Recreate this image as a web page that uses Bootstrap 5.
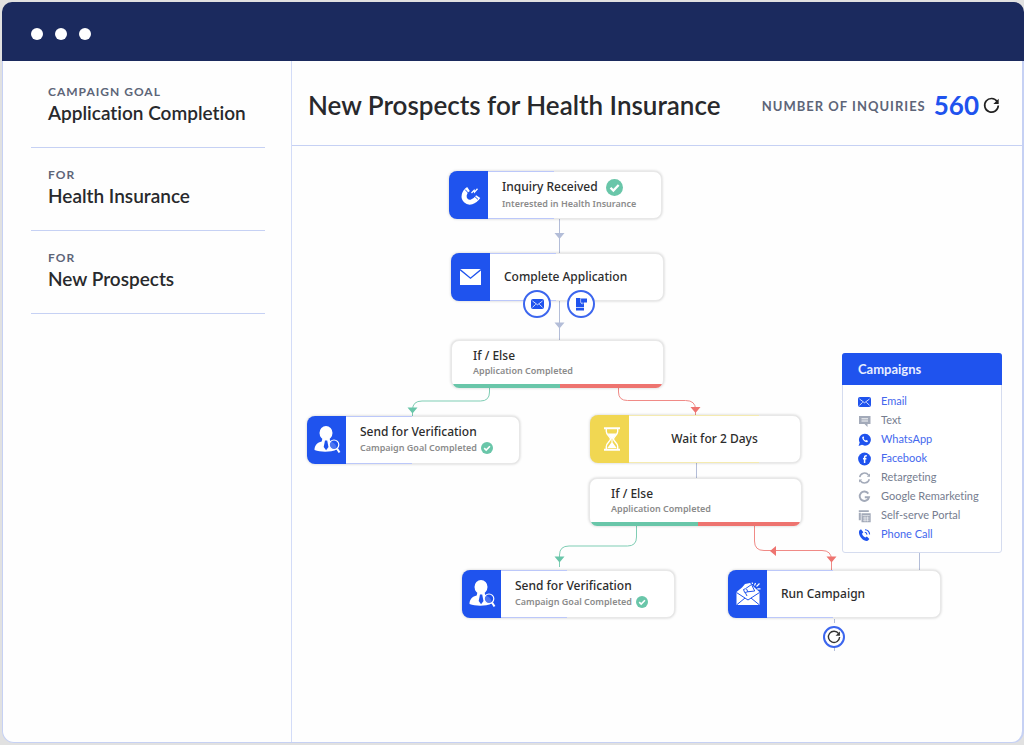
<!DOCTYPE html>
<html lang="en">
<head>
<meta charset="utf-8">
<meta name="viewport" content="width=device-width, initial-scale=1">
<title>New Prospects for Health Insurance</title>
<link href="https://cdn.jsdelivr.net/npm/bootstrap@5.3.0/dist/css/bootstrap.min.css" rel="stylesheet">
<style>
:root{--blue:#1f53ee;--line:#c6d1f4;--navy:#1b2a5e;--green:#69c6a9;--red:#ee7470;--ink:#28292c;--muted:#5d6578}
body{background:#e1e1e1;font-family:Lato,sans-serif;font-variant-ligatures:none;color:var(--ink);padding:2px 0 2px 2px}
.window{min-height:calc(100vh - 4px)}
.titlebar{background:var(--navy);height:59px;border-radius:10px 10px 0 0;padding-left:29px;gap:12px}
.window-dot{width:12px;height:12px;background:#fff;border-radius:50%}
.workspace{background:#fefefe;border:1px solid var(--line);border-top:0;border-right-width:2px;border-radius:0 0 12px 12px}
.sidebar{flex:0 0 289px;border-right:1px solid #d3dcf8;padding:4px 26px 0 28px}
.fact{padding:18px 17px 22px;border-bottom:1px solid var(--line)}
.fact dt,.count-label{font-weight:700;color:var(--muted);letter-spacing:1px}
.fact dt{font-size:12px;line-height:18px}
.fact dd{font-size:19px;line-height:24px;font-weight:600;margin:0}
.page-head{min-height:85px;padding:4px 22px 0 16px;border-bottom:1px solid var(--line)}
.page-head h1{font-size:26px;font-weight:600;line-height:32px;margin:0}
.count-label{font-size:13px;padding-top:3px}
.count{font-size:26px;line-height:32px;font-weight:700;color:var(--blue)}
.icon-btn{border:0;background:none;padding:0;line-height:0;color:#222}
.flow{overflow-x:auto;overflow-y:hidden}
.flow-canvas{width:712px;height:510px}
.wires{left:0;top:0}
/* flow nodes: their place on the canvas is set per id below */
.step{position:absolute;width:213px;height:48px;border-radius:8px;background:#fff;border:1px solid #e8e8e8;box-shadow:0 0 3px rgba(0,0,0,.2);font-family:"Noto Sans",sans-serif}
.step-icon{width:39px;height:48px;margin:-1px 0 -1px -1px;background:var(--blue);border-radius:8px 0 0 8px;flex:none}
.step-wait .step-icon{background:#f1d752}
.step-action::after{content:"";position:absolute;left:38px;width:66px;top:-1px;bottom:-1px;border:solid #bcc8fa;border-width:1px 0;pointer-events:none}
.step-wait::after{border-color:#f5ebb0;width:130px}
.step-text{padding-left:14px;white-space:nowrap}
.step-title{font-size:12px;line-height:16px;font-weight:500;color:#2c2c2c}
.step-sub{font-size:9px;line-height:16px;font-weight:600;color:#8b8b8b}
.step-branch{border-bottom:0;overflow:hidden}
.step-branch .step-text{padding-left:21px}
.step-branch .step-sub{line-height:14px}
.branch-bar{height:4px;background:linear-gradient(90deg,var(--green) 51%,var(--red) 51%)}
.channel{position:absolute;width:28px;height:28px;border:2px solid #3c66ee;border-radius:50%;background:#fff;color:var(--blue)}
#inquiry{left:157px;top:25px}
#application{left:159px;top:107px}
#branch-1{left:159px;top:194px}
#verify-1{left:15px;top:270px}
#wait{left:298px;top:269px;width:211px}
#branch-2{left:297px;top:332px}
#verify-2{left:170px;top:424px}
#run{left:436px;top:424px}
#by-email{left:231px;top:144px}
#by-mobile{left:275px;top:144px}
#repeat{left:531px;top:480px;width:22px;height:22px;color:#333}
.campaigns{position:absolute;left:550px;top:207px;width:160px;min-height:200px;border:1px solid #d5dcef;border-radius:3px;background:#fff}
.campaigns h2{margin:-1px -1px 0;height:32px;line-height:32px;padding-left:16px;background:var(--blue);color:#e8edff;font-size:13px;font-weight:700;border-radius:3px 3px 0 0}
.campaigns ul{padding:7px 0 0 15px;margin:0}
.campaigns li{height:19px;font-size:11px;gap:10px;color:#767d8f}
.campaigns li svg{color:#a3aab9;flex:none}
.campaigns a{color:#4468ee;text-decoration:none}
.campaigns .is-on svg{color:var(--blue)}
</style>
</head>
<body>
<svg class="d-none" aria-hidden="true">
  <symbol id="i-check" viewBox="0 0 18 18"><circle cx="9" cy="9" r="9" fill="#69c6a9"/><path d="M4.800 9.200l3 3 5.600-5.800" fill="none" stroke="#fff" stroke-width="2.400"/></symbol>
  <symbol id="i-refresh" viewBox="0 0 18 18"><path d="M15 4.800A7.200 7.200 0 1 0 16.200 9" fill="none" stroke="currentColor" stroke-width="1.800"/><path d="M16.600 1.800v5.600h-5.600z" fill="currentColor"/></symbol>
  <symbol id="i-mail" viewBox="0 0 13 10"><rect width="13" height="10" rx="2" fill="currentColor"/><path d="M1.500 2l5 3.800 5-3.800M1.500 8.300l3.200-3M11.500 8.300l-3.200-3" fill="none" stroke="#fff" stroke-width=".8"/></symbol>
  <symbol id="i-person" viewBox="0 0 28 28"><ellipse cx="13" cy="7" rx="6.500" ry="7" fill="#fff"/><path d="M9.500 12h7l.8 3.500c4 1 6 3 6.500 8-6 2.800-16 2.800-22.300.5 0-5 3-7.500 7.200-8.500z" fill="#fff"/><path d="M12 14.500h2.200l1.300 6.500-2.400 3.200-2.400-3.200z" fill="#1f53ee"/><circle cx="21" cy="18.800" r="4.800" fill="#1f53ee" fill-opacity=".8" stroke="#fff" stroke-width="1.200"/><path d="M24 22.500l2.500 4" stroke="#fff" stroke-width="2"/></symbol>
</svg>

<div class="window d-flex flex-column">
  <div class="titlebar d-flex align-items-center pt-1">
    <span class="window-dot"></span><span class="window-dot"></span><span class="window-dot"></span>
  </div>
  <div class="workspace d-flex flex-grow-1">
    <aside class="sidebar">
      <dl class="m-0">
        <div class="fact"><dt>CAMPAIGN GOAL</dt><dd>Application Completion</dd></div>
        <div class="fact"><dt>FOR</dt><dd>Health Insurance</dd></div>
        <div class="fact"><dt>FOR</dt><dd>New Prospects</dd></div>
      </dl>
    </aside>
    <main class="flex-grow-1 overflow-hidden">
      <header class="page-head d-flex align-items-center justify-content-between">
        <h1>New Prospects for Health Insurance</h1>
        <div class="d-flex align-items-center text-nowrap">
          <span class="count-label me-2">NUMBER OF INQUIRIES</span>
          <span class="count me-1">560</span>
          <button class="icon-btn" type="button" aria-label="Refresh"><svg width="17" height="17"><use href="#i-refresh"/></svg></button>
        </div>
      </header>
      <div class="flow">
        <div class="flow-canvas position-relative">
          <svg class="wires position-absolute" width="712" height="510" viewBox="292 146 712 510" fill="none" aria-hidden="true">
            <g stroke="#b3bdd8"><path d="M559.500 219v34M559.500 301v39M696.500 463v15M919.500 553v18"/><path d="M834.500 619v33" stroke-dasharray="4 3"/></g>
            <path d="M554.500 233h10l-5 6zM554.500 322.500h10l-5 6z" fill="#b3bdd8"/>
            <g stroke="#7fcdb4"><path d="M489.500 388v4q0 9-9 9H422q-9.500 0-9.500 9v6"/><path d="M636.500 526v11q0 9-9 9H569q-9.500 0-9.500 9v12"/></g>
            <path d="M407.500 407.500h10l-5 6zM554.500 556.500h10l-5 6z" fill="#69c6a9"/>
            <g stroke="#f08a86"><path d="M618.500 388v4q0 8.500 9 8.500h58q10 0 10 9v6"/><path d="M754.500 526v15q0 9.500 9.500 9.500h58q9.500 0 9.500 9.500v11"/></g>
            <path d="M690.500 407h10l-5 6zM826.500 556.500h10l-5 6zM776 546v10l-6-5z" fill="#ee7470"/>
          </svg>

          <div class="step step-action d-flex align-items-center" id="inquiry">
            <span class="step-icon d-flex align-items-center justify-content-center">
              <svg class="ms-1" width="22" height="22" viewBox="0 0 22 22"><path d="M8.500 5C3.800 8 2.800 13.500 5.800 16.500s8.500 2 12.400-3.800" fill="none" stroke="#fff" stroke-width="5"/><path d="M5.200 5.600l4 4.400M13.600 11.400l4.400 4" stroke="#1f53ee" stroke-width="1"/><path d="M11.500 9l2.600-2.600.4 1.800 3-3.400" fill="none" stroke="#fff" stroke-width="1.300"/></svg>
            </span>
            <div class="step-text">
              <div class="step-title d-flex align-items-center gap-2">Inquiry Received <svg width="17" height="17"><use href="#i-check"/></svg></div>
              <div class="step-sub">Interested in Health Insurance</div>
            </div>
          </div>

          <div class="step step-action d-flex align-items-center" id="application">
            <span class="step-icon d-flex align-items-center justify-content-center">
              <svg width="21" height="16" viewBox="0 0 21 16"><path d="M0 0h21v16H0z" fill="#fff"/><path d="M0 .6l10.500 8.600L21 .6" fill="none" stroke="#1f53ee" stroke-width="1.300"/></svg>
            </span>
            <div class="step-text"><div class="step-title">Complete Application</div></div>
          </div>
          <span class="channel d-flex align-items-center justify-content-center" id="by-email"><svg width="13" height="10"><use href="#i-mail"/></svg></span>
          <span class="channel d-flex align-items-center justify-content-center" id="by-mobile"><svg width="12" height="14" viewBox="0 0 12 14"><path d="M1 1h5v4l1.500 2L9 6v7.500H1z" fill="currentColor"/><path d="M6 1.500h6v4H9l-1.500 1.500V5.500H6z" fill="currentColor"/><path d="M1 10.500h8" stroke="#fff" stroke-width=".7"/><path d="M5.600 1v4.500l1.600 1.800" stroke="#fff" stroke-width=".6" fill="none"/></svg></span>

          <div class="step step-branch d-flex flex-column" id="branch-1">
            <div class="step-text my-auto"><div class="step-title">If / Else</div><div class="step-sub">Application Completed</div></div>
            <div class="branch-bar"></div>
          </div>

          <div class="step step-action d-flex align-items-center" id="verify-1">
            <span class="step-icon d-flex align-items-center justify-content-center"><svg width="28" height="28"><use href="#i-person"/></svg></span>
            <div class="step-text">
              <div class="step-title">Send for Verification</div>
              <div class="step-sub d-flex align-items-center gap-1">Campaign Goal Completed <svg width="12" height="12"><use href="#i-check"/></svg></div>
            </div>
          </div>

          <div class="step step-action step-wait d-flex align-items-center" id="wait">
            <span class="step-icon d-flex align-items-center justify-content-center">
              <svg class="ms-1" width="18" height="24" viewBox="0 0 18 24"><path d="M1 1.200h16M1 22.800h16" stroke="#fff" stroke-width="2"/><path d="M3.300 2v2.500c0 3.500 4.200 5 4.200 7.500s-4.200 4-4.200 7.500V22M14.700 2v2.500c0 3.500-4.200 5-4.200 7.500s4.200 4 4.200 7.500V22" fill="none" stroke="#fff" stroke-width="1.400"/><path d="M4.500 6.500h9L9.600 12v3.500l4 5.500H4.400l4-5.500V12z" fill="#fff"/></svg>
            </span>
            <div class="step-title flex-grow-1 text-center">Wait for 2 Days</div>
          </div>

          <div class="step step-branch d-flex flex-column" id="branch-2">
            <div class="step-text my-auto"><div class="step-title">If / Else</div><div class="step-sub">Application Completed</div></div>
            <div class="branch-bar"></div>
          </div>

          <div class="step step-action d-flex align-items-center" id="verify-2">
            <span class="step-icon d-flex align-items-center justify-content-center"><svg width="28" height="28"><use href="#i-person"/></svg></span>
            <div class="step-text">
              <div class="step-title">Send for Verification</div>
              <div class="step-sub d-flex align-items-center gap-1">Campaign Goal Completed <svg width="12" height="12"><use href="#i-check"/></svg></div>
            </div>
          </div>

          <div class="step step-action d-flex align-items-center" id="run">
            <span class="step-icon d-flex align-items-center justify-content-center">
              <svg width="26" height="26" viewBox="0 0 26 26"><path d="M1.500 11L7 6.500 10 3l5-1 5 5 4.500 4v13h-23z" fill="#fff"/><path d="M1.500 11.500L13 19l11.500-7.500M1.500 24l8.500-7M24.500 24L16 17" fill="none" stroke="#1f53ee" stroke-width="1"/><path d="M8.500 8.500l2-.8 6-4.200 3.200 6.500-7 .8-3 .8zM11.500 8l1.500 3M10.500 12l1.500 3" fill="#fff" stroke="#1f53ee" stroke-width="1"/><path d="M19.500 4.500l1-2.500M21.500 5.500l3-3M22.300 7.800h3.200M17.500 3l-.3-1.500" stroke="#fff" stroke-width="1.200"/></svg>
            </span>
            <div class="step-text"><div class="step-title">Run Campaign</div></div>
          </div>
          <button class="channel p-0 d-flex align-items-center justify-content-center" id="repeat" type="button" aria-label="Repeat"><svg width="14" height="14"><use href="#i-refresh"/></svg></button>

          <section class="campaigns">
            <h2>Campaigns</h2>
            <ul class="list-unstyled">
              <li class="is-on d-flex align-items-center"><svg width="13" height="14" viewBox="0 -2 13 14"><use href="#i-mail" width="13" height="10"/></svg><a href="#email">Email</a></li>
              <li class="d-flex align-items-center"><svg width="13" height="14" viewBox="0 0 13 14"><path d="M1 2h11.500v8H9.500v3l-3-3H1z" fill="currentColor"/><path d="M3.500 4.800h6.500M3.500 7h6.500" stroke="#fff" stroke-width=".9"/></svg>Text</li>
              <li class="is-on d-flex align-items-center"><svg width="13" height="14" viewBox="0 0 13 14"><path d="M6.800.8a5.900 5.900 0 1 1-2.800 11L.6 13l1.100-3.400A5.900 5.900 0 0 1 6.800.8z" fill="currentColor"/><path d="M4.300 4c-.6 1.800 2.400 5.500 4.900 5.200l.9-1.300-1.700-1-.9.700c-.9-.4-1.500-1.100-1.900-2l.6-.7-.7-1.700z" fill="#fff"/></svg><a href="#whatsapp">WhatsApp</a></li>
              <li class="is-on d-flex align-items-center"><svg width="13" height="14" viewBox="0 0 13 14"><circle cx="6.500" cy="7" r="6.400" fill="currentColor"/><path d="M8.800 3.900c-1.700-.3-2.200.3-2.200 1.600V11M5 6.800h3.400" fill="none" stroke="#fff" stroke-width="1.500"/></svg><a href="#facebook">Facebook</a></li>
              <li class="d-flex align-items-center"><svg width="13" height="14" viewBox="0 0 13 14"><path d="M1.700 6.200A5 5 0 0 1 10.500 4M11.300 8.200A5 5 0 0 1 2.500 10" fill="none" stroke="currentColor" stroke-width="1.500"/><path d="M12 2.600v3.200H8.800zM1 11.600v-3.200h3.200z" fill="currentColor"/></svg>Retargeting</li>
              <li class="d-flex align-items-center"><svg width="13" height="14" viewBox="0 0 13 14"><path d="M10.300 3.600A4.700 4.700 0 1 0 11 7.200H6.800" fill="none" stroke="currentColor" stroke-width="1.900"/></svg>Google Remarketing</li>
              <li class="d-flex align-items-center"><svg width="13" height="14" viewBox="0 0 13 14"><path d="M.8 1.200h10v1.800h-10zM.8 3.800h2v7.500h-2zM3.500 4.200h9.200v9H3.500z" fill="currentColor"/><path d="M4.500 6.600h7.200M5 9h6.500M5 11.200h6.500M7 7.500v5M9.400 7.500v5" stroke="#fff" stroke-width=".6"/></svg>Self-serve Portal</li>
              <li class="is-on d-flex align-items-center"><svg width="13" height="14" viewBox="0 0 13 14"><path d="M1.300 2.500L3 1.300l2.300 3L4 5.800c.6 1.700 1.700 3 3.300 3.700l1.600-1 2.500 2.600-1.600 1.700C5.500 13.800-.5 7.500 1.300 2.500z" fill="currentColor"/><path d="M6.800 4.300c1.300.2 2 1 2.200 2.300M7 1.700c2.700.2 4.400 2 4.600 4.700" fill="none" stroke="currentColor" stroke-width="1.100"/></svg><a href="#phone">Phone Call</a></li>
            </ul>
          </section>
        </div>
      </div>
    </main>
  </div>
</div>
<script src="https://cdn.jsdelivr.net/npm/bootstrap@5.3.0/dist/js/bootstrap.bundle.min.js"></script>
</body>
</html>
